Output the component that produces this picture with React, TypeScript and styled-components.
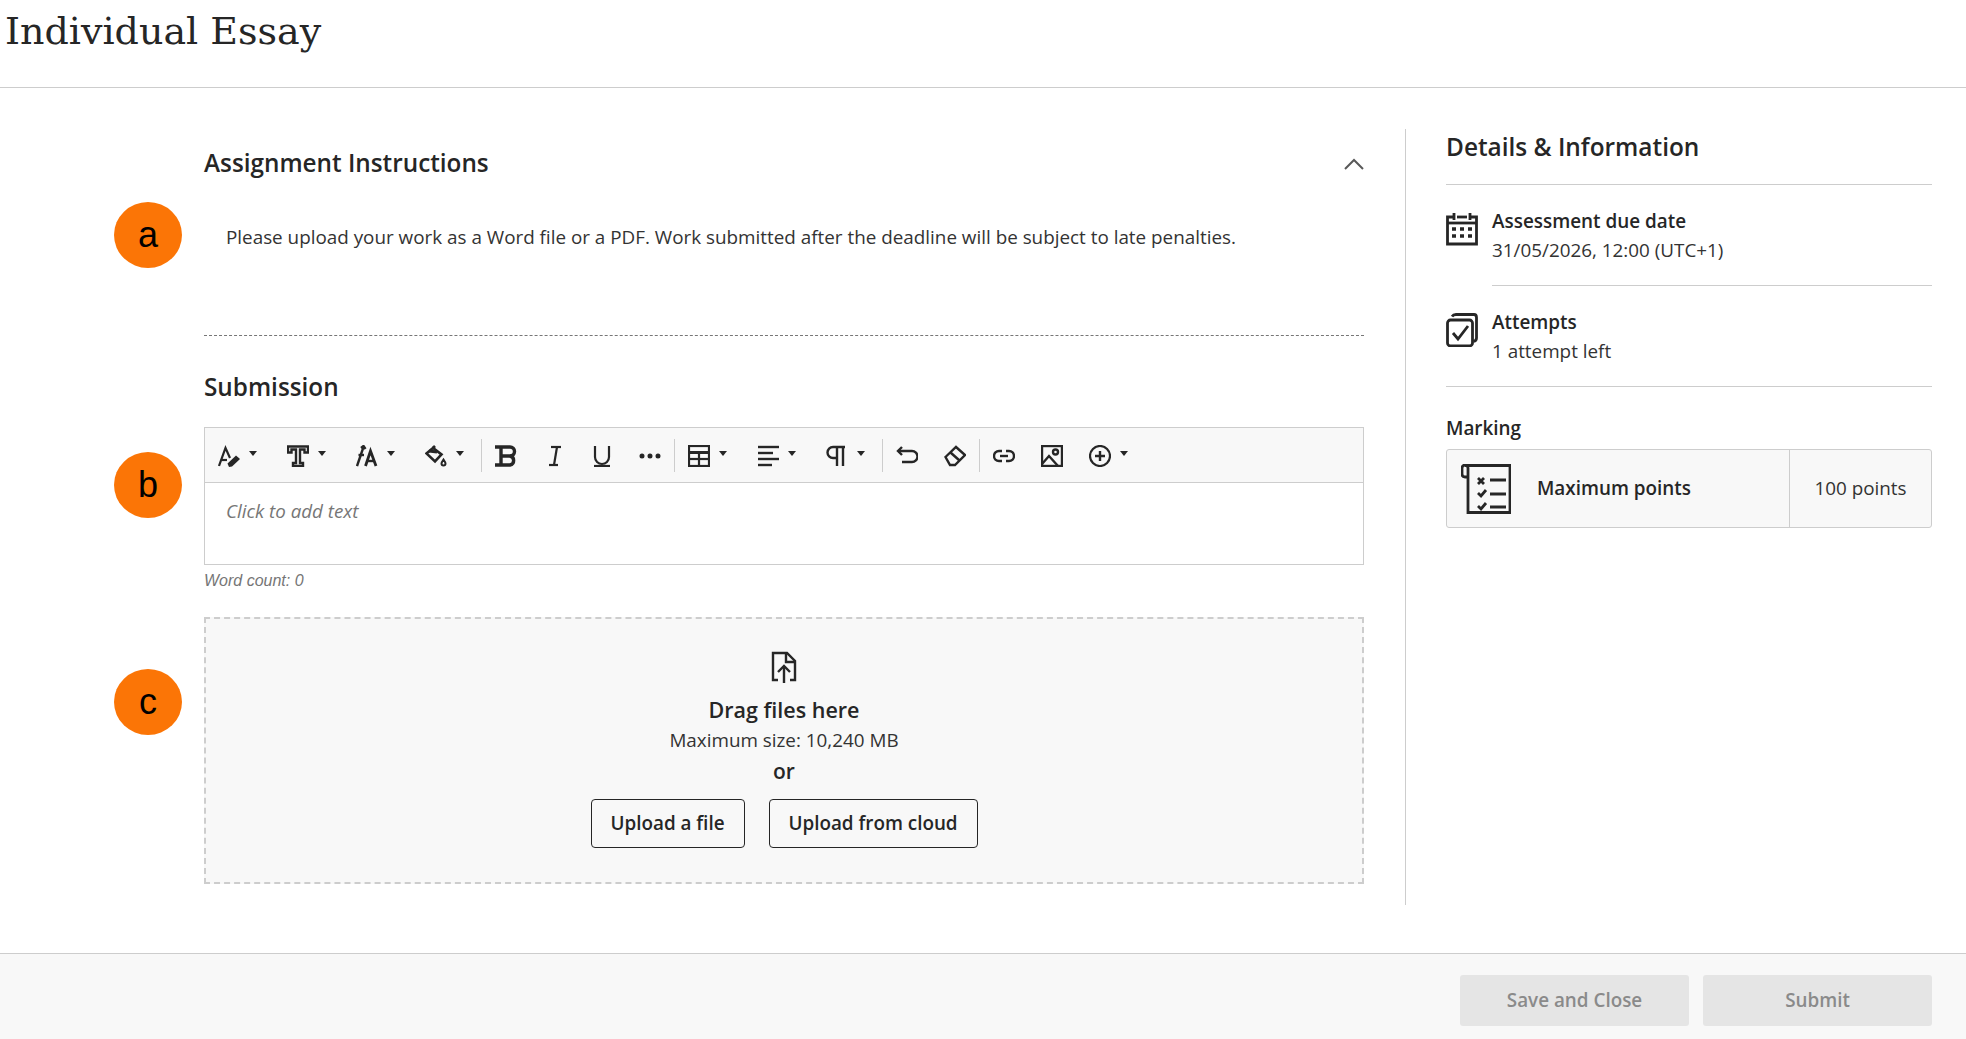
import React from 'react';
import styled, {createGlobalStyle} from 'styled-components';

const GlobalStyle = createGlobalStyle`
    html, body {
        margin: 0;
        padding: 0;
        background: #fff;
        color: #262626;
        font-family: 'Open Sans', sans-serif;
    }
`

const Page = styled.div`
    display: flex;
    flex-direction: column;
    height: 100vh;
    overflow: hidden;
`

const Header = styled.header`
    height: 87px;
    flex: none;
    border-bottom: 1px solid #cdcdcd;
`

const Title = styled.h1`
    margin: 0;
    padding: 8px 0 0 5px;
    font-family: 'DejaVu Serif', serif;
    font-size: 38px;
    line-height: 46px;
    font-weight: 400;
    color: #262626;
`

const Main = styled.main`
    flex: 1;
    display: flex;
    padding: 41px 34px 48px 204px;
    min-height: 0;
`

const Left = styled.div`
    width: 1160px;
    flex: none;
`

const InstructionsHead = styled.div`
    display: flex;
    justify-content: space-between;
    align-items: center;
    padding-top: 19px;
`

const SectionTitle = styled.h2`
    margin: 0;
    font-size: 24.3px;
    line-height: 30px;
    font-weight: 600;
`

const Chevron = styled.svg`
    width: 22px;
    height: 14px;
    margin: 2px -1px 0 0;
    color: #595959;
`

const Instructions = styled.div`
    position: relative;
    margin-top: 47px;
    padding: 0 0 86px 22px;
    border-bottom: 1px dashed #777;
    font-size: 18.85px;
    line-height: 24px;
    color: #333;
`

const Marker = styled.span<{$top: number; $inset?: number}>`
    position: absolute;
    left: ${p => -90 - (p.$inset || 0)}px;
    top: ${p => p.$top}px;
    width: 68px;
    height: 66px;
    border-radius: 50%;
    background: #fb7506;
    color: #000;
    display: flex;
    align-items: center;
    justify-content: center;
    font-family: 'Liberation Sans', sans-serif;
    font-size: 36px;
    line-height: 1;
`

const Submission = styled(SectionTitle)`
    margin-top: 36px;
`

const Editor = styled.div`
    position: relative;
    margin-top: 25px;
    height: 138px;
    box-sizing: border-box;
    border: 1px solid #cdcdcd;
`

const Toolbar = styled.div`
    height: 55px;
    box-sizing: border-box;
    background: #f8f8f8;
    border-bottom: 1px solid #cdcdcd;
    display: flex;
    align-items: center;
`

const ToolButton = styled.span<{$caret?: boolean}>`
    flex: none;
    width: ${p => (p.$caret ? 69 : 48)}px;
    height: 100%;
    box-sizing: border-box;
    padding: 1px 0 0 13px;
    display: flex;
    align-items: center;
    color: #262626;

    svg {
        width: 22px;
        height: 22px;
        flex: none;
    }
`

const Caret = styled.i`
    width: 0;
    height: 0;
    margin: -5px 0 0 9px;
    border-left: 4px solid transparent;
    border-right: 4px solid transparent;
    border-top: 5px solid #262626;
`

const ToolSep = styled.span`
    flex: none;
    width: 1px;
    height: 33px;
    background: #cdcdcd;
`

const Placeholder = styled.div`
    padding: 16px 21px;
    font-size: 18.75px;
    line-height: 24px;
    font-style: italic;
    color: #767676;
`

const WordCount = styled.div`
    margin-top: 6px;
    font-family: 'Liberation Sans', sans-serif;
    font-size: 16px;
    line-height: 20px;
    font-style: italic;
    color: #767676;
`

const DropZone = styled.div`
    position: relative;
    margin-top: 26px;
    height: 267px;
    box-sizing: border-box;
    border: 2px dashed #cdcdcd;
    background: #f8f8f8;
    display: flex;
    flex-direction: column;
    align-items: center;
    padding-top: 32px;
`

const UploadIcon = styled.svg`
    width: 26px;
    height: 32px;
    color: #262626;
`

const DropTitle = styled.div`
    margin-top: 13px;
    font-size: 21.5px;
    line-height: 28px;
    font-weight: 600;
`

const DropHint = styled.div`
    margin-top: 4px;
    font-size: 18.85px;
    line-height: 24px;
    color: #333;
`

const DropOr = styled.div`
    margin-top: 7px;
    font-size: 21px;
    line-height: 24px;
    font-weight: 600;
`

const DropActions = styled.div`
    margin-top: 16px;
    display: flex;
    gap: 24px;
`

const OutlineButton = styled.button<{$width: number}>`
    width: ${p => p.$width}px;
    height: 49px;
    box-sizing: border-box;
    background: transparent;
    border: 1.5px solid #262626;
    border-radius: 4px;
    font-family: inherit;
    font-size: 18.85px;
    line-height: 24px;
    font-weight: 600;
    color: #262626;
    padding: 0 0 2px;
`

const Aside = styled.aside`
    flex: 1;
    margin-left: 41px;
    padding: 2px 0 0 40px;
    border-left: 1px solid #cdcdcd;
    min-width: 0;
`

const DetailsTitle = styled.h2`
    margin: 0;
    padding-bottom: 21px;
    border-bottom: 1px solid #cdcdcd;
    font-size: 24.4px;
    line-height: 32px;
    font-weight: 600;
`

const InfoList = styled.div`
    border-bottom: 1px solid #cdcdcd;
`

const InfoRow = styled.div`
    display: flex;
    gap: 14px;
`

const InfoIcon = styled.svg`
    flex: none;
    width: 32px;
    height: 34px;
    margin-top: 27px;
    color: #262626;
`

const InfoText = styled.div<{$rule?: boolean}>`
    flex: 1;
    padding: 24px 0 23px;
    ${p => (p.$rule ? 'border-bottom: 1px solid #cdcdcd;' : '')}
`

const InfoLabel = styled.div`
    font-size: 18.9px;
    line-height: 24px;
    font-weight: 600;
`

const InfoValue = styled.div`
    margin-top: 5px;
    font-size: 18.85px;
    line-height: 24px;
    color: #333;
`

const MarkingLabel = styled.div`
    margin-top: 29px;
    font-size: 18.9px;
    line-height: 24px;
    font-weight: 600;
`

const MarkingCard = styled.div`
    margin-top: 9px;
    height: 79px;
    box-sizing: border-box;
    border: 1px solid #cdcdcd;
    border-radius: 3px;
    background: #f8f8f8;
    display: flex;
    align-items: center;
`

const MarkingIcon = styled.svg`
    flex: none;
    width: 50px;
    height: 50px;
    margin-left: 14px;
    color: #262626;
`

const MarkingName = styled.div`
    flex: 1;
    margin-left: 26px;
    padding-bottom: 2px;
    font-size: 18.85px;
    font-weight: 600;
`

const MarkingValue = styled.div`
    align-self: stretch;
    width: 142px;
    padding-bottom: 2px;
    box-sizing: border-box;
    display: flex;
    align-items: center;
    justify-content: center;
    border-left: 1px solid #cdcdcd;
    font-size: 18.85px;
    color: #333;
`

const Footer = styled.footer`
    flex: none;
    height: 86px;
    box-sizing: border-box;
    border-top: 1px solid #cdcdcd;
    background: #f8f8f8;
    display: flex;
    justify-content: flex-end;
    gap: 14px;
    padding: 21px 34px 0;
`

const DisabledButton = styled.button`
    width: 229px;
    height: 51px;
    background: #e5e5e5;
    border: none;
    border-radius: 3px;
    font-family: inherit;
    font-size: 18.85px;
    line-height: 24px;
    font-weight: 600;
    color: #8a8a8a;
    padding: 0 0 1px;
`

const Stroke = ({children, w = 2}: {children: React.ReactNode; w?: number}) => (
    <svg viewBox="0 0 22 22" fill="none" stroke="currentColor" strokeWidth={w}>
        {children}
    </svg>
)

const tools: {icon: React.ReactNode; caret?: boolean}[][] = [
    [
        {caret: true, icon: <Stroke w={2.2}><path d="M1 21 7.500 3l4.500 10" /><path d="M4 15h5" /><path d="M11 22l-1.500-3.500 8.500-8 4 3.500-8 7.500z" fill="currentColor" stroke="none" /></Stroke>},
        {caret: true, icon: <Stroke w={2.4}><path d="M1 1.500h20v6h-3.500v-3H13v13.500h3v3H6v-3h3V4.500H4.500v3H1z" /></Stroke>},
        {caret: true, icon: <Stroke w={2.4}><path d="M1 21 7.500 2" /><path d="M5 3l2.500-2 2 3" /><path d="M2.500 10H8" /><path d="M9.500 21l5-15 5.500 15" strokeWidth="2.800" /><path d="M11 16h7.500" /></Stroke>},
        {caret: true, icon: <Stroke w={2.6}><path d="M8 3 1.500 8.500l8.500 8 6.500-7z" /><path d="M4 6l8 1" strokeWidth="3" /><path d="M8 3l2-2" /><path d="M18.500 14.500c-1.200 1.700-2 3-2 4a2 2 0 0 0 4 0c0-1-.8-2.300-2-4z" strokeWidth="2" /></Stroke>},
    ],
    [
        {icon: <Stroke w={3.4}><path d="M0 2h15a4.500 4.500 0 0 1 0 9H6" /><path d="M15 11a4.600 4.600 0 0 1 0 9H0" /><path d="M6 2v18" /></Stroke>},
        {icon: <Stroke w={2.2}><path d="M8 2h10" /><path d="M14 2 11 20" /><path d="M6 20h9" /></Stroke>},
        {icon: <Stroke w={2.2}><path d="M4 1v11a7 7 0 0 0 14 0V1" /><path d="M3 21h16" /></Stroke>},
        {icon: <Stroke><circle cx="3" cy="11" r="1.500" fill="currentColor" /><circle cx="11" cy="11" r="1.500" fill="currentColor" /><circle cx="19" cy="11" r="1.500" fill="currentColor" /></Stroke>},
    ],
    [
        {caret: true, icon: <Stroke w={2.2}><rect x="1" y="1" width="20" height="20" /><path d="M1 7.500h20" strokeWidth="3" /><path d="M1 14h20" /><path d="M11 8v13" /></Stroke>},
        {caret: true, icon: <Stroke w={2.4}><path d="M1 2h21" /><path d="M1 8h15" /><path d="M1 14h21" /><path d="M1 20h14" /></Stroke>},
        {caret: true, icon: <Stroke w={2.4}><path d="M11 21V2" /><path d="M17 21V2" /><path d="M19 2H7a5.500 5.500 0 0 0 0 11h4" /></Stroke>},
    ],
    [
        {icon: <Stroke w={2.4}><path d="M6 2 2 6l4 4" /><path d="M2 6h14a5 5 0 0 1 0 11H6" /></Stroke>},
        {icon: <Stroke w={2.4}><path d="M1.500 12 12 2l9 8-10 10H6z" /><path d="M6.500 7.500l9 8" /></Stroke>},
    ],
    [
        {icon: <Stroke w={2.4}><path d="M9 6H6a5 5 0 0 0 0 10h3" /><path d="M13 6h3a5 5 0 0 1 0 10h-3" /><path d="M7 11h8" /></Stroke>},
        {icon: <Stroke w={2.4}><rect x="1" y="1" width="20" height="20" /><path d="M1 19l7-8 9 10" /><circle cx="14.500" cy="7" r="2.500" /></Stroke>},
        {caret: true, icon: <Stroke w={2.2}><circle cx="11" cy="11" r="10" /><path d="M11 6v10M6 11h10" strokeWidth="2.400" /></Stroke>},
    ],
]

export default function App() {
    return (
        <Page>
            <GlobalStyle />
            <Header>
                <Title>Individual Essay</Title>
            </Header>
            <Main>
                <Left>
                    <InstructionsHead>
                        <SectionTitle>Assignment Instructions</SectionTitle>
                        <Chevron viewBox="0 0 22 14" fill="none" stroke="currentColor" strokeWidth="2">
                            <path d="M2 12 11 3l9 9" />
                        </Chevron>
                    </InstructionsHead>
                    <Instructions>
                        <Marker $top={-23}>a</Marker>
                        Please upload your work as a Word file or a PDF. Work submitted after the deadline will be subject to late penalties.
                    </Instructions>
                    <Submission>Submission</Submission>
                    <Editor>
                        <Marker $top={24} $inset={1}>b</Marker>
                        <Toolbar>
                            {tools.map((group, g) => (
                                <React.Fragment key={g}>
                                    {g > 0 && <ToolSep />}
                                    {group.map((tool, i) => (
                                        <ToolButton key={i} $caret={tool.caret}>
                                            {tool.icon}
                                            {tool.caret && <Caret />}
                                        </ToolButton>
                                    ))}
                                </React.Fragment>
                            ))}
                        </Toolbar>
                        <Placeholder>Click to add text</Placeholder>
                    </Editor>
                    <WordCount>Word count: 0</WordCount>
                    <DropZone>
                        <Marker $top={50} $inset={2}>c</Marker>
                        <UploadIcon viewBox="0 0 26 32" fill="none" stroke="currentColor" strokeWidth="2.400">
                            <path d="M7 29H2V2h14l8 8v19h-5" />
                            <path d="M15 2v9h9" />
                            <path d="M13 32V15" />
                            <path d="M7 21l6-6 6 6" />
                        </UploadIcon>
                        <DropTitle>Drag files here</DropTitle>
                        <DropHint>Maximum size: 10,240 MB</DropHint>
                        <DropOr>or</DropOr>
                        <DropActions>
                            <OutlineButton $width={154}>Upload a file</OutlineButton>
                            <OutlineButton $width={209}>Upload from cloud</OutlineButton>
                        </DropActions>
                    </DropZone>
                </Left>
                <Aside>
                    <DetailsTitle>Details &amp; Information</DetailsTitle>
                    <InfoList>
                        <InfoRow>
                            <InfoIcon viewBox="0 0 32 34" fill="none" stroke="currentColor" strokeWidth="2.800">
                                <path d="M7 5H1.500v27h29V5H25" />
                                <path d="M11 5h10" />
                                <path d="M8 1v7M24 1v7" />
                                <path d="M2 11h28" />
                                <path d="M6 17h4M14 17h4M22 17h4M6 24h4M14 24h4M22 24h4" strokeWidth="3.500" />
                            </InfoIcon>
                            <InfoText $rule>
                                <InfoLabel>Assessment due date</InfoLabel>
                                <InfoValue>31/05/2026, 12:00 (UTC+1)</InfoValue>
                            </InfoText>
                        </InfoRow>
                        <InfoRow>
                            <InfoIcon viewBox="0 0 32 34" fill="none" stroke="currentColor" strokeWidth="2.800">
                                <rect x="1.500" y="7" width="25" height="26" rx="3" />
                                <path d="M6 3.500C7 2 8 1.500 10 1.500h18c2 0 2.500 1 2.500 3V25c0 2-1 3-3 3.500" />
                                <path d="M7 20l5 6 10-13" />
                            </InfoIcon>
                            <InfoText>
                                <InfoLabel>Attempts</InfoLabel>
                                <InfoValue>1 attempt left</InfoValue>
                            </InfoText>
                        </InfoRow>
                    </InfoList>
                    <MarkingLabel>Marking</MarkingLabel>
                    <MarkingCard>
                        <MarkingIcon viewBox="0 0 50 50" fill="none" stroke="currentColor" strokeWidth="2.800">
                            <path d="M7 6V4a3 3 0 0 0-6 0v6c0 2 .5 3 3 3h3" />
                            <path d="M4 1.500h45V48.500H7V6" />
                            <path d="M17 14l6 6M23 14l-6 6" />
                            <path d="M17 29l3 3 5-6M17 42l3 3 5-6" />
                            <path d="M29 16h16M29 30h16M29 43h16" strokeWidth="3" />
                        </MarkingIcon>
                        <MarkingName>Maximum points</MarkingName>
                        <MarkingValue>100 points</MarkingValue>
                    </MarkingCard>
                </Aside>
            </Main>
            <Footer>
                <DisabledButton>Save and Close</DisabledButton>
                <DisabledButton>Submit</DisabledButton>
            </Footer>
        </Page>
    )
}
